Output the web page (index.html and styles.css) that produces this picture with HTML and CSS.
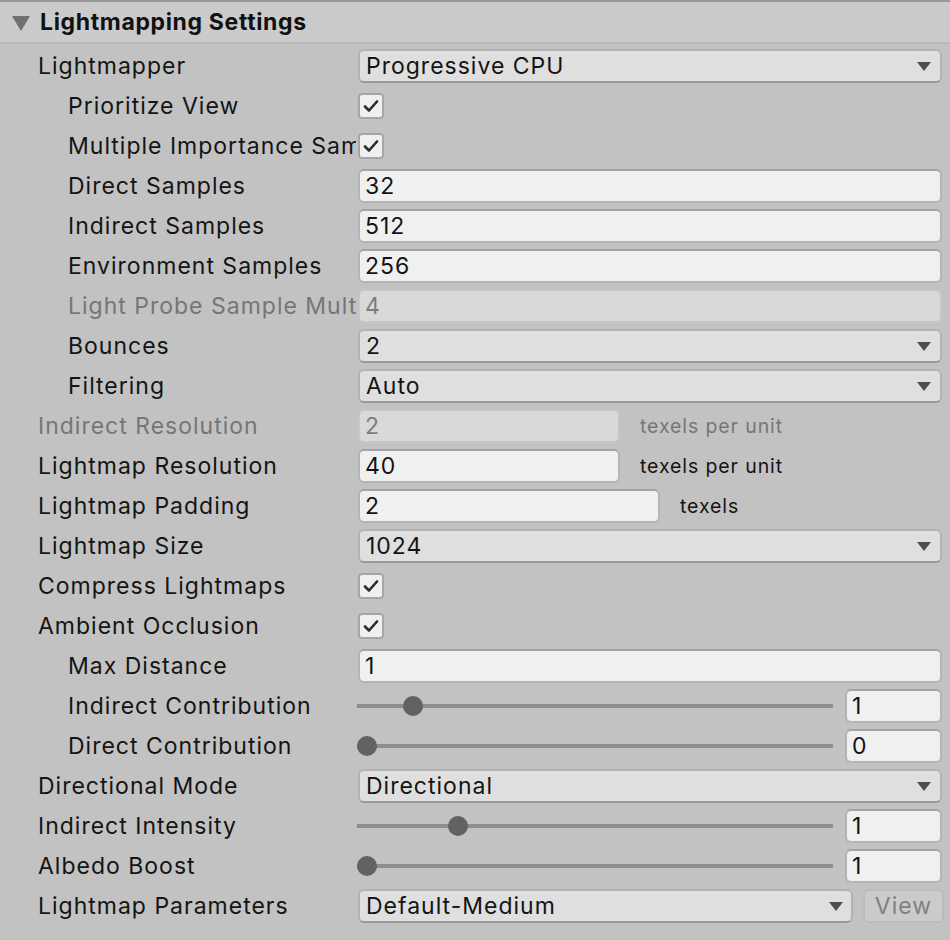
FILE: index.html
```html
<!DOCTYPE html>
<html>
<head>
<meta charset="utf-8">
<link rel="stylesheet" href="styles.css">
</head>
<body>
<div class="panel">
  <div class="header">
    <span class="fold"></span>
    <span class="title">Lightmapping Settings</span>
  </div>
  <div class="rows">
    <div class="row"><div class="label">Lightmapper</div><div class="dropdown"><span>Progressive CPU</span><i class="arrow"></i></div></div>
    <div class="row"><div class="label sub">Prioritize View</div><div><span class="check"><svg viewBox="0 0 26 26"><path d="M7 13.5 L11 17.5 L19 8.5" /></svg></span></div></div>
    <div class="row"><div class="label sub">Multiple Importance Sampling</div><div><span class="check"><svg viewBox="0 0 26 26"><path d="M7 13.5 L11 17.5 L19 8.5" /></svg></span></div></div>
    <div class="row"><div class="label sub">Direct Samples</div><div class="field">32</div></div>
    <div class="row"><div class="label sub">Indirect Samples</div><div class="field">512</div></div>
    <div class="row"><div class="label sub">Environment Samples</div><div class="field">256</div></div>
    <div class="row"><div class="label sub disabled">Light Probe Sample Multiplier</div><div class="field off">4</div></div>
    <div class="row"><div class="label sub">Bounces</div><div class="dropdown"><span>2</span><i class="arrow"></i></div></div>
    <div class="row"><div class="label sub">Filtering</div><div class="dropdown"><span>Auto</span><i class="arrow"></i></div></div>
    <div class="row"><div class="label disabled">Indirect Resolution</div><div class="withsuffix res"><div class="field off">2</div><span class="suffix disabled">texels per unit</span></div></div>
    <div class="row"><div class="label">Lightmap Resolution</div><div class="withsuffix res"><div class="field">40</div><span class="suffix">texels per unit</span></div></div>
    <div class="row"><div class="label">Lightmap Padding</div><div class="withsuffix pad"><div class="field">2</div><span class="suffix">texels</span></div></div>
    <div class="row"><div class="label">Lightmap Size</div><div class="dropdown"><span>1024</span><i class="arrow"></i></div></div>
    <div class="row"><div class="label">Compress Lightmaps</div><div><span class="check"><svg viewBox="0 0 26 26"><path d="M7 13.5 L11 17.5 L19 8.5" /></svg></span></div></div>
    <div class="row"><div class="label">Ambient Occlusion</div><div><span class="check"><svg viewBox="0 0 26 26"><path d="M7 13.5 L11 17.5 L19 8.5" /></svg></span></div></div>
    <div class="row"><div class="label sub">Max Distance</div><div class="field">1</div></div>
    <div class="row"><div class="label sub">Indirect Contribution</div><div class="slider"><div class="track"><span class="thumb" style="--v:0.1"></span></div><div class="field">1</div></div></div>
    <div class="row"><div class="label sub">Direct Contribution</div><div class="slider"><div class="track"><span class="thumb" style="--v:0"></span></div><div class="field">0</div></div></div>
    <div class="row"><div class="label">Directional Mode</div><div class="dropdown"><span>Directional</span><i class="arrow"></i></div></div>
    <div class="row"><div class="label">Indirect Intensity</div><div class="slider"><div class="track"><span class="thumb" style="--v:0.2"></span></div><div class="field">1</div></div></div>
    <div class="row"><div class="label">Albedo Boost</div><div class="slider"><div class="track"><span class="thumb" style="--v:0"></span></div><div class="field">1</div></div></div>
    <div class="row"><div class="label">Lightmap Parameters</div><div class="params"><div class="dropdown"><span>Default-Medium</span><i class="arrow"></i></div><button class="view">View</button></div></div>
  </div>
</div>
</body>
</html>
```
FILE: styles.css
```css
html, body {
  margin: 0;
  padding: 0;
  background: #c2c2c2;
  overflow: hidden;
}
body {
  font-family: Inter, "Noto Sans", sans-serif;
  font-size: 23px;
  color: #141414;
  width: 950px;
  height: 940px;
}
.panel {
  display: flex;
  flex-direction: column;
}
.header {
  height: 40px;
  background: #cbcbcb;
  border-top: 2px solid #999999;
  border-bottom: 2px solid #b9b9b9;
  display: flex;
  align-items: center;
  padding-left: 12px;
  gap: 10px;
}
.fold {
  width: 0;
  height: 0;
  border-left: 9px solid transparent;
  border-right: 9px solid transparent;
  border-top: 15px solid #707070;
  margin-top: 2px;
}
.title {
  font-weight: 700;
  font-size: 23px;
  letter-spacing: 0.65px;
  color: #111111;
}
.rows {
  display: flex;
  flex-direction: column;
  padding-top: 2px;
}
.row {
  height: 40px;
  display: grid;
  grid-template-columns: 358px 1fr;
  align-items: center;
  padding-right: 8px;
}
.label {
  padding-left: 38px;
  width: 356px;
  box-sizing: border-box;
  white-space: nowrap;
  overflow: hidden;
  letter-spacing: 1px;
}
.label.sub {
  padding-left: 68px;
}
.disabled {
  color: #767676;
}
.dropdown {
  height: 34px;
  box-sizing: border-box;
  background: #dfdfdf;
  border: 2px solid #b3b3b3;
  border-bottom-color: #999999;
  border-radius: 6px;
  display: flex;
  align-items: center;
  justify-content: space-between;
  padding: 0 9px 0 6px;
  letter-spacing: 1px;
}
.arrow {
  width: 0;
  height: 0;
  border-left: 7px solid transparent;
  border-right: 7px solid transparent;
  border-top: 9px solid #505050;
}
.field {
  height: 34px;
  box-sizing: border-box;
  background: #f0f0f0;
  border: 2px solid #b4b4b4;
  border-top-color: #a4a4a4;
  border-radius: 6px;
  display: flex;
  align-items: center;
  padding-left: 5px;
  letter-spacing: 1px;
}
.field.off {
  background: #d9d9d9;
  border-color: #c6c6c6;
  color: #7c7c7c;
}
.check {
  width: 26px;
  height: 26px;
  box-sizing: border-box;
  background: #f0f0f0;
  border: 2px solid #a6a6a6;
  border-radius: 4px;
  display: block;
  position: relative;
}
.check svg {
  position: absolute;
  left: -2px;
  top: -2px;
  width: 26px;
  height: 26px;
}
.check path {
  fill: none;
  stroke: #2b2b2b;
  stroke-width: 2.6;
  stroke-linecap: round;
  stroke-linejoin: round;
}
.withsuffix {
  display: flex;
  align-items: center;
}
.withsuffix.res .field {
  width: 262px;
}
.withsuffix.pad .field {
  width: 302px;
}
.suffix {
  margin-left: 20px;
  font-size: 19.5px;
  letter-spacing: 0.9px;
}
.slider {
  display: grid;
  grid-template-columns: 476px 1fr;
  column-gap: 12px;
  align-items: center;
  margin-left: -1px;
}
.track {
  height: 4px;
  background: #8e8e8e;
  position: relative;
}
.thumb {
  position: absolute;
  width: 20px;
  height: 20px;
  border-radius: 50%;
  background: #626262;
  top: -8px;
  left: calc(var(--v) * (100% - 20px));
}
.params {
  display: flex;
  align-items: center;
  gap: 10px;
}
.params .dropdown {
  width: 495px;
  padding-right: 8px;
}
.view {
  flex: 1;
  height: 34px;
  margin-right: -2px;
  background: #cbcbcb;
  border: 2px solid #bcbcbc;
  border-radius: 6px;
  color: #808080;
  font-family: Inter, "Noto Sans", sans-serif;
  font-size: 23px;
  letter-spacing: 1px;
  padding: 0;
}
```
